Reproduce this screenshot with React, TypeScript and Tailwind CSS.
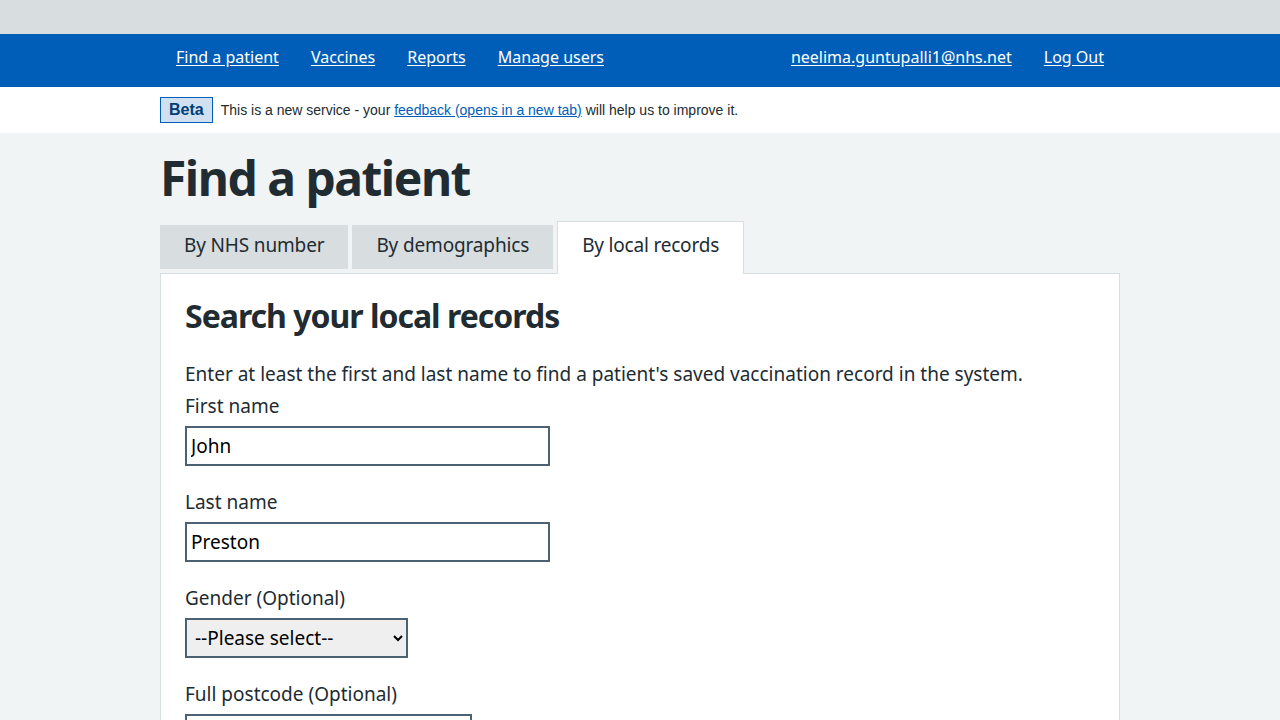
import React from "react";

const font = { fontFamily: '"Noto Sans", Roboto, sans-serif' };

function NavLink({ children }: { children: React.ReactNode }) {
  return (
    <a href="#" className="px-4 text-[16px] text-white underline underline-offset-2">
      {children}
    </a>
  );
}

function Field({ label, value, width }: { label: string; value?: string; width: string }) {
  return (
    <div className="mb-[24px]">
      <label className="block text-[19px] leading-[24px] text-[#212b32] mb-[8px]">{label}</label>
      <input
        defaultValue={value}
        className={`${width} h-[40px] border-2 border-[#4c6272] bg-white px-[4px] text-[19px] text-black outline-none`}
      />
    </div>
  );
}

export default function App() {
  return (
    <div className="min-h-screen bg-[#f0f4f5]" style={font}>
      <div className="h-[34px] bg-[#d8dde0]" />
      <header className="bg-[#005eb8] h-[53px]">
        <nav className="mx-auto w-[960px] h-full flex items-center justify-between pb-[8px]">
          <div className="flex">
            <NavLink>Find a patient</NavLink>
            <NavLink>Vaccines</NavLink>
            <NavLink>Reports</NavLink>
            <NavLink>Manage users</NavLink>
          </div>
          <div className="flex">
            <NavLink>neelima.guntupalli1@nhs.net</NavLink>
            <NavLink>Log Out</NavLink>
          </div>
        </nav>
      </header>
      <div className="bg-white h-[46px]">
        <div className="mx-auto w-[960px] h-full flex items-center gap-2" style={{ fontFamily: '"Liberation Sans", Arial, sans-serif' }}>
          <span className="border border-[#005eb8] bg-[#d0e0f0] px-[8px] h-[26px] flex items-center text-[16px] font-bold text-[#003d78]">
            Beta
          </span>
          <span className="text-[14px] text-[#212b32]">
            This is a new service - your{" "}
            <a href="#" className="text-[#005eb8] underline">feedback (opens in a new tab)</a>{" "}
            will help us to improve it.
          </span>
        </div>
      </div>
      <main className="mx-auto w-[960px] pt-[14px]">
        <h1 className="text-[48px] leading-[62px] font-bold text-[#212b32] mb-[12px] tracking-[-1.5px]">Find a patient</h1>
        <div className="flex items-end gap-[4px]">
          <div className="h-[44px] mb-[4px] px-[24px] pb-[3px] flex items-center bg-[#d8dde0] text-[19px] text-[#212b32] tracking-[-0.15px]">By NHS number</div>
          <div className="h-[44px] mb-[4px] px-[24px] pb-[3px] flex items-center bg-[#d8dde0] text-[19px] text-[#212b32] tracking-[-0.15px]">By demographics</div>
          <div className="h-[53px] px-[24px] flex items-center bg-white border border-b-0 border-[#d8dde0] text-[19px] text-[#212b32] relative z-10 -mb-px pb-[6px] tracking-[-0.2px]">By local records</div>
        </div>
        <section className="bg-white border border-[#d8dde0] px-[24px] pt-[22px] pb-[40px] min-h-[500px]">
          <h2 className="text-[32px] leading-[40px] font-bold text-[#212b32] mb-[24px] tracking-[-1px]">Search your local records</h2>
          <p className="text-[19px] leading-[28px] text-[#212b32] mb-[6px]">
            Enter at least the first and last name to find a patient's saved vaccination record in the system.
          </p>
          <Field label="First name" value="John" width="w-[365px]" />
          <Field label="Last name" value="Preston" width="w-[365px]" />
          <div className="mb-[24px]">
            <label className="block text-[19px] leading-[24px] text-[#212b32] mb-[8px]">Gender (Optional)</label>
            <select className="w-[223px] h-[40px] border-2 border-[#4c6272] bg-[#efefef] px-[4px] text-[19px] text-black">
              <option>--Please select--</option>
              <option>Male</option>
              <option>Female</option>
            </select>
          </div>
          <Field label="Full postcode (Optional)" width="w-[287px]" />
        </section>
      </main>
    </div>
  );
}
